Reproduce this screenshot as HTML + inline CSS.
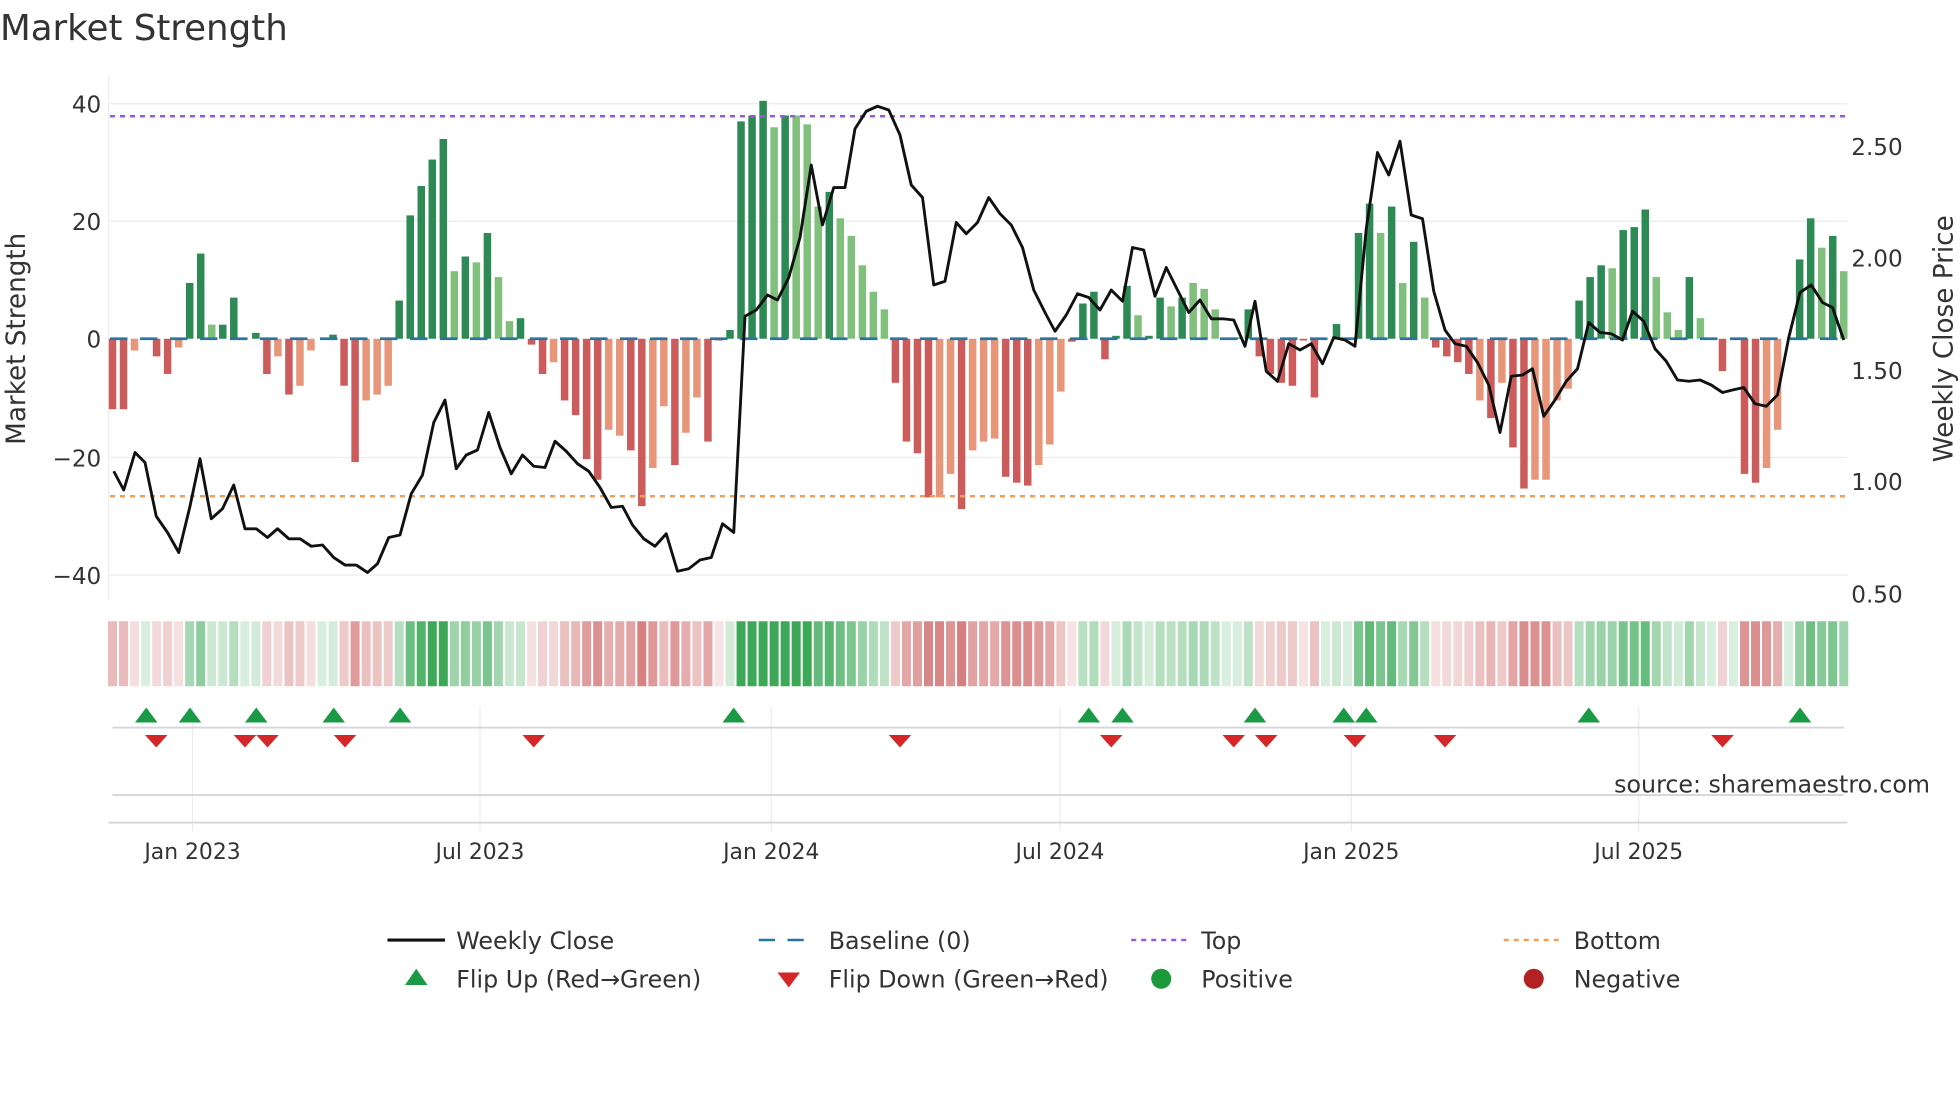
<!DOCTYPE html>
<html><head><meta charset="utf-8"><style>
html,body{margin:0;padding:0;background:#fff;width:1960px;height:1102px;overflow:hidden}
svg{display:block}
text{font-family:"DejaVu Sans","Liberation Sans",sans-serif;fill:#333}
</style></head><body>
<svg id="s" width="1960" height="1102" viewBox="0 0 1568 881.6" xmlns="http://www.w3.org/2000/svg">
<text x="0" y="32" font-size="28.5" fill="#333">Market Strength</text>
<g stroke="#ececf0" stroke-width="1">
<line x1="88" y1="83" x2="1478" y2="83"/><line x1="88" y1="177" x2="1478" y2="177"/><line x1="88" y1="366" x2="1478" y2="366"/><line x1="88" y1="460" x2="1478" y2="460"/>
<line x1="87" y1="60" x2="87" y2="480"/>
<line x1="154" y1="565" x2="154" y2="665"/><line x1="384" y1="565" x2="384" y2="665"/><line x1="617" y1="565" x2="617" y2="665"/><line x1="848" y1="565" x2="848" y2="665"/><line x1="1081" y1="565" x2="1081" y2="665"/><line x1="1311" y1="565" x2="1311" y2="665"/>
</g>
<g font-size="18.5" text-anchor="end">
<text x="81" y="90">40</text><text x="81" y="184">20</text><text x="81" y="278">0</text><text x="81" y="373">−20</text><text x="81" y="467">−40</text>
</g>
<g font-size="18.5">
<text x="1481" y="124">2.50</text><text x="1481" y="213">2.00</text><text x="1481" y="303">1.50</text><text x="1481" y="392">1.00</text><text x="1481" y="482">0.50</text>
</g>
<text transform="translate(20,271) rotate(-90)" font-size="21" text-anchor="middle">Market Strength</text>
<text transform="translate(1562,271) rotate(-90)" font-size="21" text-anchor="middle">Weekly Close Price</text>
<g id="bars"></g>
<g id="heat"></g>
<line x1="88" y1="271" x2="1478" y2="271" stroke="#2a75a0" stroke-width="2.2" stroke-dasharray="14,10"/>
<line x1="88" y1="93" x2="1478" y2="93" stroke="#9b59d9" stroke-width="2" stroke-dasharray="4,4"/>
<line x1="88" y1="397" x2="1478" y2="397" stroke="#f0a050" stroke-width="2" stroke-dasharray="4,4"/>
<polyline id="price" fill="none" stroke="#111" stroke-width="2.3" stroke-linejoin="round"/>
<line x1="90" y1="582" x2="1475" y2="582" stroke="#d4d6da" stroke-width="1.5"/>
<line x1="90" y1="636" x2="1475" y2="636" stroke="#d4d6da" stroke-width="1.5"/>
<line x1="87" y1="658" x2="1478" y2="658" stroke="#d4d6da" stroke-width="1.5"/>
<g id="flips"></g>
<text x="1544" y="634" font-size="19" text-anchor="end" fill="#999">source: sharemaestro.com</text>
<g font-size="17.5" text-anchor="middle">
<text x="154" y="687">Jan 2023</text><text x="384" y="687">Jul 2023</text><text x="617" y="687">Jan 2024</text><text x="848" y="687">Jul 2024</text><text x="1081" y="687">Jan 2025</text><text x="1311" y="687">Jul 2025</text>
</g>
<g font-size="19">
<line x1="310" y1="752" x2="356" y2="752" stroke="#111" stroke-width="2.5"/><text x="365" y="759">Weekly Close</text>
<line x1="607" y1="752" x2="652" y2="752" stroke="#2a75a0" stroke-width="2" stroke-dasharray="13,10"/><text x="663" y="759">Baseline (0)</text>
<line x1="905" y1="752" x2="950" y2="752" stroke="#9b59d9" stroke-width="2" stroke-dasharray="4,4"/><text x="961" y="759">Top</text>
<line x1="1203" y1="752" x2="1248" y2="752" stroke="#f0a050" stroke-width="2" stroke-dasharray="4,4"/><text x="1259" y="759">Bottom</text>
<polygon points="324,788 342,788 333,775" fill="#1a9a45"/><text x="365" y="790">Flip Up (Red→Green)</text>
<polygon points="622,778 640,778 631,790" fill="#d62728"/><text x="663" y="790">Flip Down (Green→Red)</text>
<circle cx="929" cy="783" r="8" fill="#1a9a3a"/><text x="961" y="790">Positive</text>
<circle cx="1227" cy="783" r="8" fill="#b22222"/><text x="1259" y="790">Negative</text>
</g>
</svg>
<script>
var V=[[-12,0],[-12,0],[-2,1],[0,0],[-3,0],[-6,0],[-1.5,1],[9.5,0],[14.5,0],[2.4,1],[2.4,0],[7,0],[0,0],[1,0],[-6,0],[-3,1],[-9.5,0],[-8,1],[-2,1],[0,0],[0.7,0],[-8,0],[-21,0],[-10.5,1],[-9.5,1],[-8,1],[6.5,0],[21,0],[26,0],[30.5,0],[34,0],[11.5,1],[14,0],[13,1],[18,0],[10.5,1],[3,1],[3.5,0],[-1,0],[-6,0],[-4,1],[-10.5,0],[-13,0],[-20.5,0],[-24,0],[-15.5,1],[-16.5,1],[-19,0],[-28.5,0],[-22,1],[-11.5,1],[-21.5,0],[-16,1],[-10,1],[-17.5,0],[-0.3,0],[1.5,0],[37,0],[38,0],[40.5,0],[36,1],[38,0],[38,1],[36.5,1],[22.5,1],[25,0],[20.5,1],[17.5,1],[12.5,1],[8,1],[5,1],[-7.5,0],[-17.5,0],[-19.5,0],[-27,0],[-27,1],[-23,1],[-29,0],[-19,1],[-17.5,1],[-17,1],[-23.5,0],[-24.5,0],[-25,0],[-21.5,1],[-18,1],[-9,1],[-0.5,0],[6,0],[8,0],[-3.5,0],[0.5,0],[9,0],[4,1],[0.5,0],[7,0],[5.5,1],[7,0],[9.5,1],[8.5,1],[5,1],[0,0],[0.2,0],[5,0],[-3,0],[-6,0],[-7.5,0],[-8,0],[-0.3,0],[-10,0],[0,0],[2.5,0],[0,0],[18,0],[23,0],[18,1],[22.5,0],[9.5,1],[16.5,0],[7,1],[-1.5,0],[-3,0],[-4,0],[-6,0],[-10.5,1],[-13.5,0],[-7.5,1],[-18.5,0],[-25.5,0],[-24,1],[-24,1],[-10.5,1],[-8.5,1],[6.5,0],[10.5,0],[12.5,0],[12,1],[18.5,0],[19,0],[22,0],[10.5,1],[4.5,1],[1.5,1],[10.5,0],[3.5,1],[0,0],[-5.5,0],[0,0],[-23,0],[-24.5,0],[-22,1],[-15.5,1],[0,0],[13.5,0],[20.5,0],[15.5,1],[17.5,0],[11.5,1]];
var NS="http://www.w3.org/2000/svg",n=V.length,x0=90,step=(1475-90)/(n-1),b=document.getElementById('bars'),h=document.getElementById('heat');
function r(g,x,y,w,hh,c){var e=document.createElementNS(NS,'rect');e.setAttribute('x',x);e.setAttribute('y',y);e.setAttribute('width',w);e.setAttribute('height',hh);e.setAttribute('fill',c);g.appendChild(e);}
V.forEach(function(v,i){var x=x0+i*step,val=v[0],hh=Math.abs(val)*4.7;
var c=val>=0?(v[1]?'#80bf7c':'#2e8a55'):(v[1]?'#e8967a':'#cc5c5c');
if(hh>0.3)r(b,x-3,val>=0?271-hh:271,6,hh,c);
var t=Math.min(1,Math.abs(val)/30)*0.8+0.2;
var hc=val>=0?'rgba(40,160,70,'+(t*0.9)+')':'rgba(200,80,80,'+(t*0.75)+')';
r(h,x-3.6,497,7.2,52,hc);});
var P=[[91,377],[99,392],[108,362],[116,370],[125,413],[134,426],[143,442],[152,405],[160,367],[169,415],[178,407],[187,388],[196,423],[205,423],[214,430],[222,423],[231,431],[240,431],[249,437],[258,436],[267,446],[276,452],[285,452],[294,458],[302,451],[311,430],[320,428],[329,395],[338,380],[347,338],[356,320],[365,375],[373,364],[382,360],[391,330],[400,358],[409,379],[418,364],[427,373],[436,374],[444,353],[453,361],[462,371],[471,377],[480,390],[489,406],[498,405],[506,420],[515,431],[524,437],[533,427],[542,457],[551,455],[560,448],[569,446],[578,419],[587,426],[596,253],[605,248],[614,236],[622,240],[631,222],[640,190],[649,132],[658,180],[667,150],[676,150],[684,103],[693,89],[702,85],[711,88],[720,108],[729,148],[738,158],[747,228],[756,225],[765,178],[773,187],[782,178],[791,158],[800,171],[809,180],[818,198],[827,232],[836,250],[844,265],[853,252],[862,235],[871,238],[880,248],[889,232],[898,241],[906,198],[915,200],[924,237],[933,214],[942,232],[951,250],[960,240],[969,255],[978,255],[987,256],[996,277],[1004,241],[1013,297],[1022,305],[1031,275],[1040,280],[1049,275],[1058,291],[1067,270],[1076,272],[1084,277],[1093,183],[1102,122],[1111,140],[1120,113],[1129,172],[1138,175],[1147,233],[1156,264],[1164,275],[1173,277],[1182,290],[1191,308],[1200,346],[1209,301],[1218,300],[1226,295],[1235,333],[1244,320],[1253,305],[1262,295],[1271,258],[1280,266],[1289,267],[1298,272],[1306,249],[1315,257],[1324,279],[1333,289],[1342,304],[1351,305],[1360,304],[1369,308],[1378,314],[1386,312],[1395,310],[1404,323],[1413,325],[1422,316],[1431,270],[1440,234],[1449,228],[1458,242],[1466,246],[1475,272]];
document.getElementById('price').setAttribute('points',P.map(function(p){return p.join(',')}).join(' '));
var f=document.getElementById('flips'),U=[117,152,205,267,320,587,871,898,1004,1075,1093,1271,1440],D=[125,196,214,276,427,720,889,987,1013,1084,1156,1378];
function poly(pts,c){var e=document.createElementNS(NS,'polygon');e.setAttribute('points',pts);e.setAttribute('fill',c);f.appendChild(e);}
U.forEach(function(x){poly((x-9)+',578 '+(x+9)+',578 '+x+',566','#1a9a45');});
D.forEach(function(x){poly((x-9)+',588 '+(x+9)+',588 '+x+',598','#d62728');});
</script>
</body></html>
